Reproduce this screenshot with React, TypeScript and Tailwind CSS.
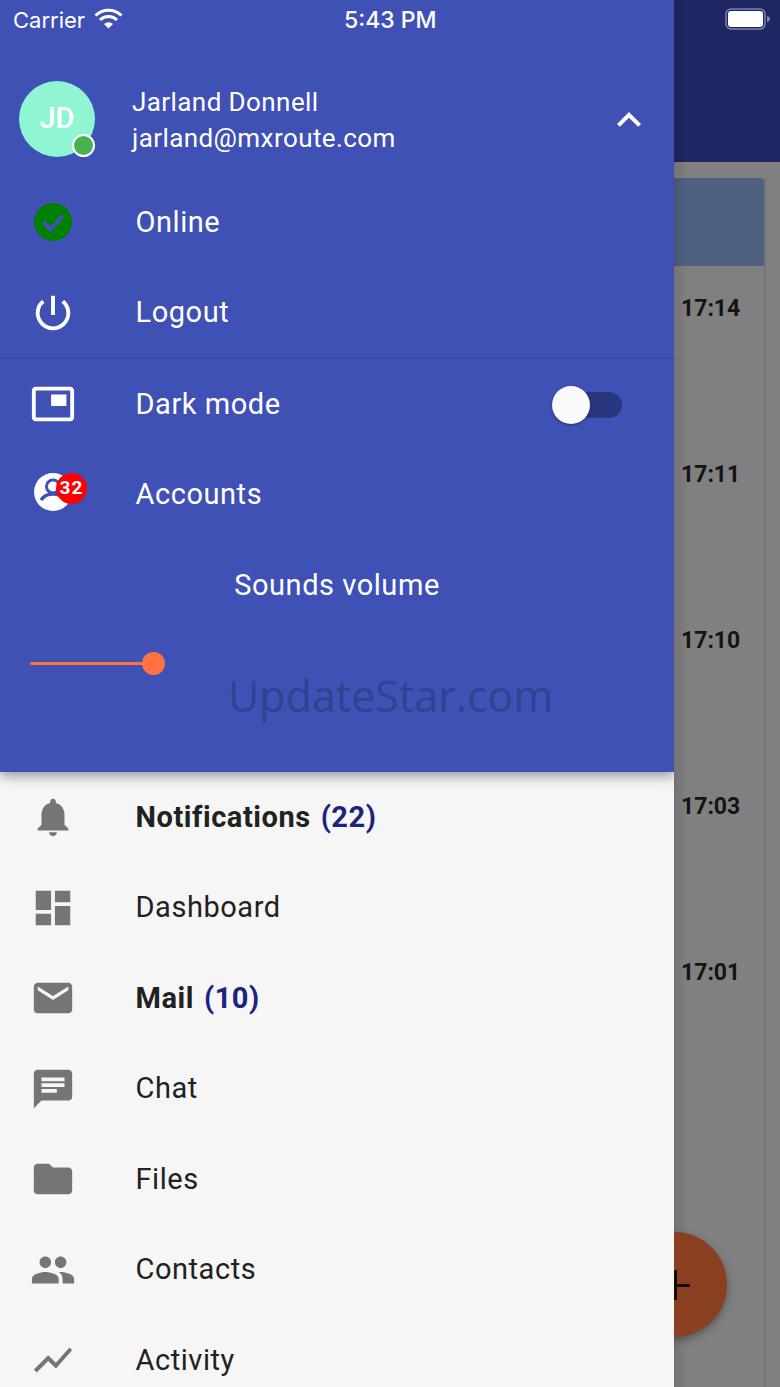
import React from 'react';
import {
  MdNotifications,
  MdDashboard,
  MdEmail,
  MdChat,
  MdFolder,
  MdPeople,
  MdShowChart,
  MdPowerSettingsNew,
  MdPictureInPicture,
  MdKeyboardArrowUp,
} from 'react-icons/md';

const times = ['17:14', '17:11', '17:10', '17:03', '17:01'];

const NavRow = ({ icon, children }: { icon: React.ReactNode; children: React.ReactNode }) => (
  <div className="flex h-[90.5px] items-center gap-[60px] pl-[30px] text-[29px] tracking-[0.55px]">
    <div className="flex w-[46px] shrink-0 items-center justify-center">{icon}</div>
    <div className="-ml-[0.5px]">{children}</div>
  </div>
);

const StatusBar = () => (
  <div className="absolute top-0 left-0 z-30 flex h-10 w-[780px] items-center justify-between pr-[9px] pl-[13px] font-['Inter',sans-serif] text-[22px] text-white">
    <div className="flex items-center gap-[9px]">
      <span className="font-normal">Carrier</span>
      <svg width="29" height="21" viewBox="0 0 29 21" fill="none" className="mb-[3px]">
        <path d="M1.5 7.5a18.5 18.5 0 0 1 26 0" stroke="white" strokeWidth="3" />
        <path d="M6 12a12 12 0 0 1 17 0" stroke="white" strokeWidth="3" />
        <path d="M10 16a6.4 6.4 0 0 1 9 0l-4.500 4.500z" fill="white" />
      </svg>
    </div>
    <span className="absolute left-[344px] text-[23px] font-medium">5:43 PM</span>
    <svg width="46" height="22" viewBox="0 0 46 22" fill="none" className="mb-[2px]">
      <rect x="1" y="1" width="39" height="20" rx="5" stroke="#7a83b5" strokeWidth="1.500" />
      <rect x="3" y="3" width="35" height="16" rx="3" fill="white" />
      <path d="M42 8c2 .5 3 1.500 3 3s-1 2.500-3 3z" fill="#7a83b5" />
    </svg>
  </div>
);

const AccountIcon = () => (
  <svg width="46" height="46" viewBox="0 0 46 46" fill="none" className="-mt-[3px] mb-[3px]">
    <circle cx="23" cy="23" r="19" fill="white" />
    <circle cx="23" cy="17.500" r="6.500" fill="white" stroke="#3f51b5" strokeWidth="3" />
    <path d="M11 31c3-4.500 8-6 12-6s9 1.500 12 6" stroke="#3f51b5" strokeWidth="3.500" />
  </svg>
);

export default function App() {
  return (
    <div className="relative flex h-[1387px] w-[780px] overflow-hidden bg-[#808080] font-['Roboto',sans-serif]">
      <StatusBar />

      {/* Drawer */}
      <div className="relative z-20 flex h-full w-[674px] shrink-0 flex-col overflow-hidden bg-[#f6f6f6] text-[#212121]">
        <div className="relative z-10 flex h-[772px] shrink-0 flex-col bg-[#3f51b5] text-white shadow-[0_4px_12px_rgba(0,0,0,0.4)]">
          <div className="flex h-[177px] items-start pt-[81px] pl-[19px]">
            <div className="relative flex h-[76px] w-[76px] shrink-0 items-center justify-center rounded-full bg-[#8ff5d2] text-[29px] font-medium">
              JD
              <div className="absolute top-[53px] left-[53px] h-[23px] w-[23px] rounded-full border-2 border-white bg-[#4caf50]" />
            </div>
            <div className="ml-[37px] flex-1 pt-[3px] text-[26px] leading-[36px] tracking-[0.42px]">
              <div>Jarland Donnell</div>
              <div>jarland@mxroute.com</div>
            </div>
            <MdKeyboardArrowUp size={48} className="mt-[15px] mr-[21px]" />
          </div>

          <NavRow
            icon={
              <svg width="46" height="46" viewBox="0 0 46 46" fill="none">
                <circle cx="23" cy="23" r="19" fill="#008000" />
                <path d="M13.500 23.500l7 7L33 16.500" stroke="#3f51b5" strokeWidth="4" />
              </svg>
            }
          >
            Online
          </NavRow>
          <NavRow icon={<MdPowerSettingsNew size={46} />}>Logout</NavRow>
          <div className="h-px bg-[#36459f]" />
          <NavRow icon={<MdPictureInPicture size={50} />}>Dark mode</NavRow>
          <NavRow
            icon={
              <div className="relative">
                <AccountIcon />
                <div className="absolute top-[1px] left-[26px] flex h-[31px] w-[31px] items-center justify-center rounded-full bg-[#ff0000] text-[19px] font-bold tracking-[1px]">
                  32
                </div>
              </div>
            }
          >
            Accounts
          </NavRow>
          <div className="flex h-[90.5px] items-center justify-center text-[29px] tracking-[0.55px]">Sounds volume</div>
          <div className="ml-[30px] flex h-[66px] w-[135px] items-center">
            <div className="h-[3px] w-[123px] rounded-full bg-[#ff7043]" />
            <div className="-ml-[11px] h-[23px] w-[23px] shrink-0 rounded-full bg-[#ff7043]" />
          </div>

          {/* Dark mode switch */}
          <div className="absolute top-[392px] left-[552px] h-[26px] w-[70px] rounded-full bg-[#2a3680]">
            <div className="absolute top-[-6px] left-0 h-[38px] w-[38px] rounded-full bg-[#fafafa] shadow-[0_1px_3px_rgba(0,0,0,0.4)]" />
          </div>

          {/* Watermark */}
          <div className="absolute top-[667px] left-[228px] font-['Open_Sans',sans-serif] text-[43px] leading-[58px] text-[#34418f]">
            UpdateStar.com
          </div>
        </div>

        <div>
          <NavRow icon={<MdNotifications size={46} className="text-[#757575]" />}>
            <span className="font-bold">Notifications</span>
            <span className="ml-[10px] font-bold text-[#1a237e]">(22)</span>
          </NavRow>
          <NavRow icon={<MdDashboard size={46} className="text-[#757575]" />}>Dashboard</NavRow>
          <NavRow icon={<MdEmail size={46} className="text-[#757575]" />}>
            <span className="font-bold">Mail</span>
            <span className="ml-[10px] font-bold text-[#1a237e]">(10)</span>
          </NavRow>
          <NavRow icon={<MdChat size={46} className="text-[#757575]" />}>Chat</NavRow>
          <NavRow icon={<MdFolder size={46} className="text-[#757575]" />}>Files</NavRow>
          <NavRow icon={<MdPeople size={46} className="text-[#757575]" />}>Contacts</NavRow>
          <NavRow icon={<MdShowChart size={46} className="text-[#757575]" />}>Activity</NavRow>
        </div>
      </div>

      {/* Page behind the drawer */}
      <div className="relative flex min-w-0 flex-1 flex-col">
        <div className="h-[162px] shrink-0 bg-[#1e2761]" />
        <div className="mt-[16px] mr-[14px] flex-1 border-r-2 border-[#747474]">
          <div className="h-[88px] rounded-tr-[4px] bg-[#4f6180]" />
          {times.map((time) => (
            <div key={time} className="flex h-[166px] items-start pt-[28px] pl-[7px] text-[23px] leading-[30px] font-bold text-[#141414]">
              {time}
            </div>
          ))}
        </div>
        <div className="pointer-events-none absolute top-0 left-0 h-full w-[14px] bg-gradient-to-r from-[rgba(0,0,0,0.1)] to-transparent" />
      </div>

      {/* Add button, mostly under the drawer */}
      <div className="absolute top-[1232px] left-[622px] z-10 flex h-[105px] w-[105px] items-center justify-center rounded-full bg-[#8a3f20] shadow-[0_3px_8px_rgba(0,0,0,0.35)]">
        <div className="relative h-[30px] w-[30px]">
          <div className="absolute top-[14px] left-[0] h-[3px] w-[30px] bg-[#1a0a05]" />
          <div className="absolute top-0 left-[14px] h-[30px] w-[3px] bg-[#1a0a05]" />
        </div>
      </div>
    </div>
  );
}
